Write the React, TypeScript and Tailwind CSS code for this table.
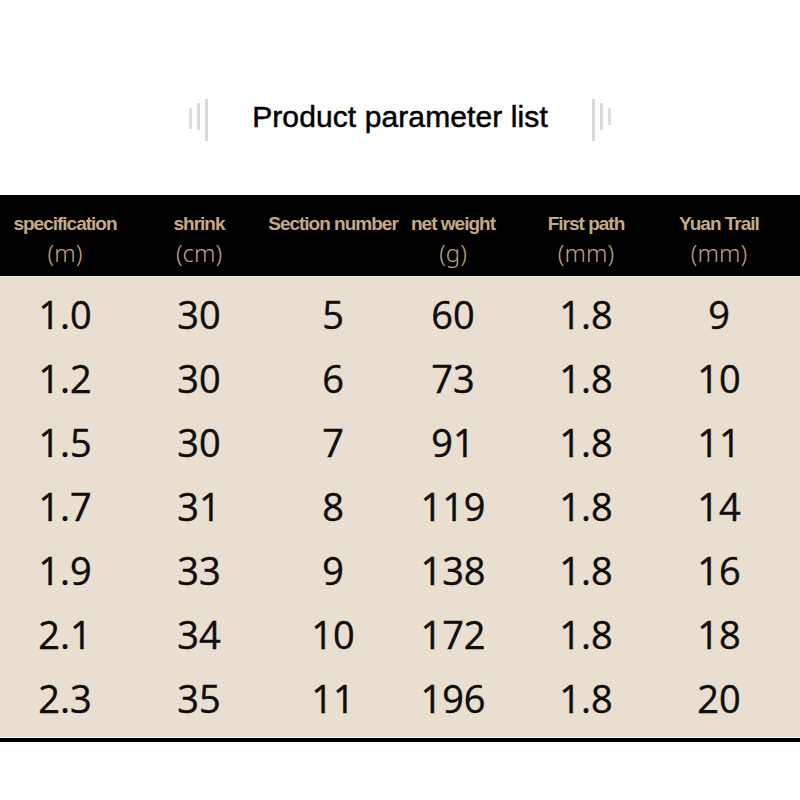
import React from "react";

const cols = [
  { h: "specification", u: "(m)" },
  { h: "shrink", u: "(cm)" },
  { h: "Section number", u: "" },
  { h: "net weight", u: "(g)" },
  { h: "First path", u: "(mm)" },
  { h: "Yuan Trail", u: "(mm)" },
];

const rows = [
  ["1.0", "30", "5", "60", "1.8", "9"],
  ["1.2", "30", "6", "73", "1.8", "10"],
  ["1.5", "30", "7", "91", "1.8", "11"],
  ["1.7", "31", "8", "119", "1.8", "14"],
  ["1.9", "33", "9", "138", "1.8", "16"],
  ["2.1", "34", "10", "172", "1.8", "18"],
  ["2.3", "35", "11", "196", "1.8", "20"],
];

const grid = "grid grid-cols-[130px_138px_130px_110px_156px_110px]";

export default function App() {
  return (
    <div className="w-[800px] h-[800px] bg-white overflow-hidden">
      <div className="h-[195px] pt-[99px]">
        <div className="flex justify-center items-start gap-[44px]">
          <div className="flex items-start gap-[5px] h-[42px]">
            <div className="w-[3px] h-[21px] mt-[9px] bg-[#dedede]" />
            <div className="w-[3px] h-[27px] mt-[4px] bg-[#dadada]" />
            <div className="w-[3px] h-[42px] bg-[#d8d8d8]" />
          </div>
          <div
            className="h-[36px] leading-[36px] text-[30px] text-black tracking-[0.1px] [-webkit-text-stroke:0.5px_#000]"
            style={{ fontFamily: '"Liberation Sans", Arial, sans-serif' }}
          >
            Product parameter list
          </div>
          <div className="flex items-start gap-[5px] h-[42px]">
            <div className="w-[3px] h-[42px] bg-[#d8d8d8]" />
            <div className="w-[3px] h-[27px] mt-[4px] bg-[#dadada]" />
            <div className="w-[3px] h-[17px] mt-[9px] bg-[#dedede]" />
          </div>
        </div>
      </div>

      <div className={`${grid} h-[81px] bg-black pt-[18px]`}>
        {cols.map((c, i) => (
          <div key={i} className="flex flex-col items-center">
            <div
              className="h-[22px] leading-[22px] text-[19px] font-bold tracking-[-1px] text-[#c6aa84] whitespace-nowrap"
              style={{ fontFamily: '"Liberation Sans", Arial, sans-serif' }}
            >
              {c.h}
            </div>
            <div
              className="mt-[4px] h-[28px] leading-[28px] text-[24px] font-light text-[#bfa480] whitespace-nowrap"
              style={{ fontFamily: '"Noto Sans", sans-serif' }}
            >
              {c.u}
            </div>
          </div>
        ))}
      </div>

      <div className="bg-[#e9dfd0] border-t border-[#f1e9dd] pt-[5px] pb-[7px]">
        {rows.map((r, i) => (
          <div key={i} className={`${grid} h-[64px]`}>
            {r.map((v, j) => (
              <div
                key={j}
                className="text-center leading-[64px] text-[38px] text-[#0e0e0e] [-webkit-text-stroke:0.4px_#0e0e0e]"
                style={{ fontFamily: '"Open Sans", sans-serif' }}
              >
                {v}
              </div>
            ))}
          </div>
        ))}
      </div>
      <div className="h-[1px] bg-[#f4ede2]" />
      <div className="h-[4px] bg-black" />
    </div>
  );
}
